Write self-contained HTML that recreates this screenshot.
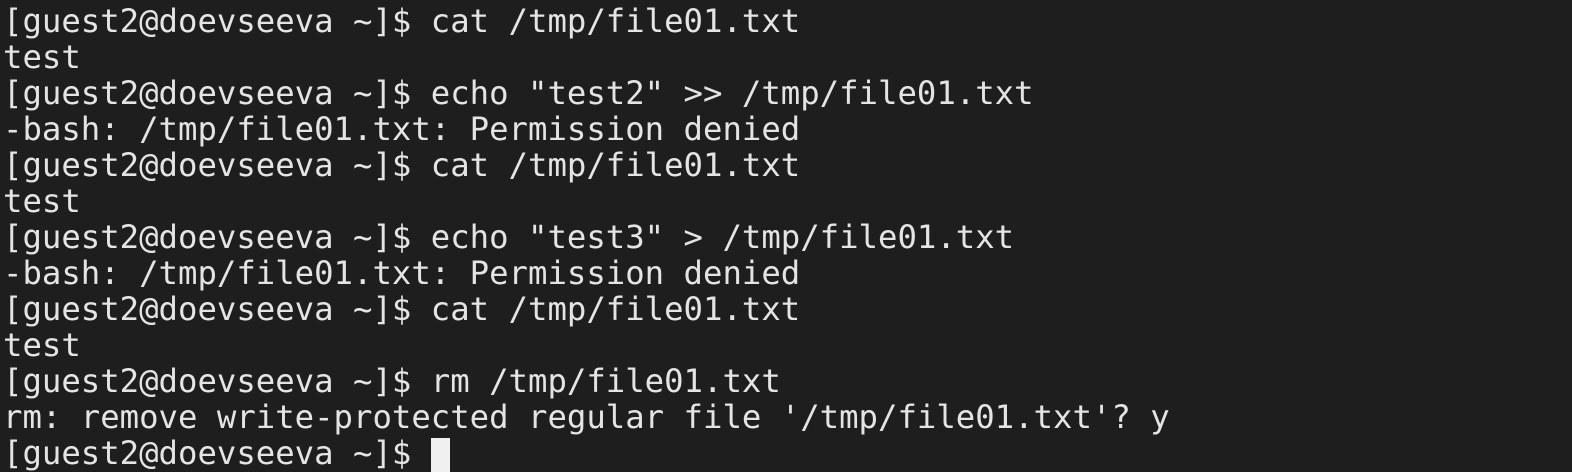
<!DOCTYPE html>
<html><head><meta charset="utf-8"><style>
html,body{margin:0;padding:0;background:#1e1e1e;width:1572px;height:472px;overflow:hidden}
pre{margin:0;position:absolute;left:3px;top:3px;font-family:"DejaVu Sans Mono","Liberation Mono",monospace;font-size:32.3px;line-height:36px;color:#e4e4e4}
.c{display:inline-block;width:19px;height:34px;background:#f0f0f0;vertical-align:-8px}
</style></head><body><pre>[guest2@doevseeva ~]$ cat /tmp/file01.txt
test
[guest2@doevseeva ~]$ echo "test2" &gt;&gt; /tmp/file01.txt
-bash: /tmp/file01.txt: Permission denied
[guest2@doevseeva ~]$ cat /tmp/file01.txt
test
[guest2@doevseeva ~]$ echo "test3" &gt; /tmp/file01.txt
-bash: /tmp/file01.txt: Permission denied
[guest2@doevseeva ~]$ cat /tmp/file01.txt
test
[guest2@doevseeva ~]$ rm /tmp/file01.txt
rm: remove write-protected regular file '/tmp/file01.txt'? y
[guest2@doevseeva ~]$ <span class="c"></span></pre></body></html>
